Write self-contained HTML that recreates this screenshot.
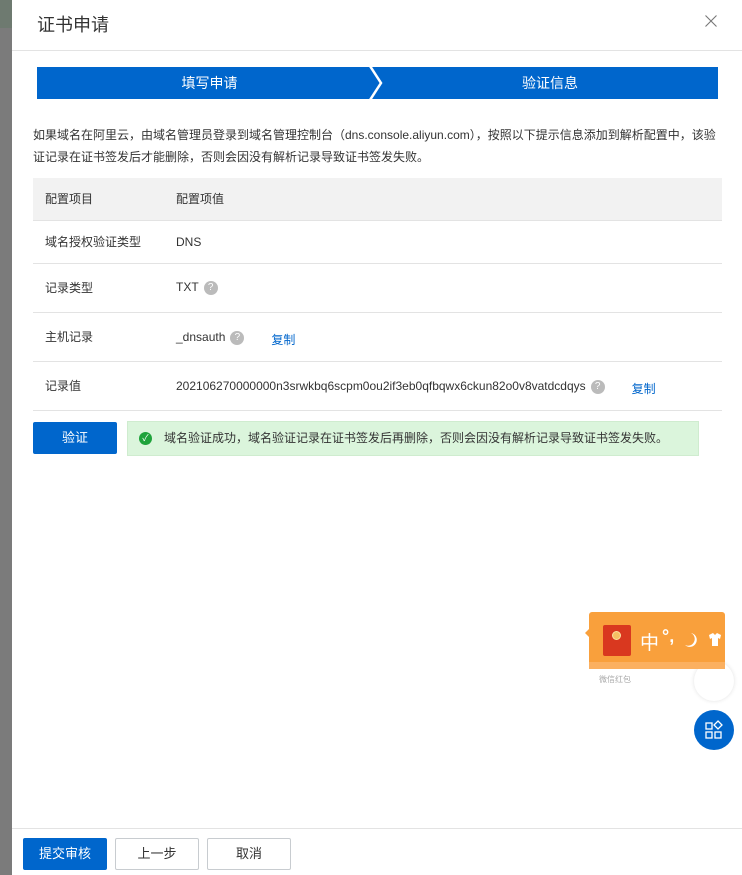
<!DOCTYPE html>
<html><head><meta charset="utf-8"><style>
*{box-sizing:border-box;margin:0;padding:0}
body{width:742px;height:875px;overflow:hidden;position:relative;background:#fff;font-family:"Liberation Sans","Noto Sans CJK SC",sans-serif;color:#333;font-size:12px}
.side{position:absolute;left:0;top:0;width:12px;height:875px;background:#7b7b7b}
.side .t{position:absolute;left:0;top:0;width:12px;height:28px;background:#6e7a70}
.modal{position:absolute;left:12px;top:0;width:730px;height:875px;background:#fff}
.title{position:absolute;left:25px;top:11px;font-size:18px;color:#333}
.hr{position:absolute;left:0;right:0;height:1px;background:#e3e3e3}
.steps{position:absolute;left:25px;top:67px;width:681px;height:32px}
.step{position:absolute;top:0;height:32px;background:#0066cc;color:#fff;font-size:14px;line-height:32px;text-align:center}
.desc{position:absolute;left:21px;top:124px;width:690px;font-size:12px;line-height:22px;color:#333}
table{position:absolute;left:21px;top:178px;width:689px;border-collapse:collapse}
td{border-bottom:1px solid #e3e3e3;padding-left:12px;font-size:12px;color:#333}
tr.h td{background:#f2f2f2;height:42px;border-bottom:1px solid #e3e3e3}
.q{display:inline-block;width:14px;height:14px;border-radius:50%;background:#bbb;color:#fff;font-size:10px;line-height:14px;text-align:center;vertical-align:middle;margin-left:5px}
.lk{color:#0066cc}
.btn{position:absolute;height:32px;line-height:30px;text-align:center;font-size:13px;border:1px solid #c8ccd0;background:#fff;color:#333;border-radius:2px}
.btn.p{background:#0066cc;border-color:#0066cc;color:#fff}
.msg{position:absolute;left:115px;top:421px;width:572px;height:35px;background:#dbf5dc;border:1px solid #cfeccf;line-height:33px;padding-left:36px;font-size:12px;color:#333}
.ok{position:absolute;left:11px;top:10px;width:13px;height:13px;border-radius:50%;background:#1fa33b;color:#fff;font-size:9px;line-height:13px;text-align:center}
</style></head><body>
<div class="side"><div class="t"></div></div>
<div class="modal">
<div class="title">证书申请</div>
<svg style="position:absolute;left:693px;top:15px" width="12" height="12"><path d="M0.5 0.5 L11.5 11.5 M11.5 0.5 L0.5 11.5" stroke="#777" stroke-width="1.1"/></svg>
<div class="hr" style="top:50px"></div>
<div class="steps">
<div class="step" style="left:0;width:345px">填写申请</div>
<div class="step" style="left:345px;width:336px">验证信息</div>
<svg style="position:absolute;left:332px;top:0" width="26" height="32"><path d="M0 0 L12 0 L22 16 L12 32 L0 32 L10 16Z" fill="#0066cc"/><path d="M1 -1 L12 16 L1 33" stroke="#fff" stroke-width="2.5" fill="none"/></svg>
</div>
<div class="desc">如果域名在阿里云，由域名管理员登录到域名管理控制台（dns.console.aliyun.com），按照以下提示信息添加到解析配置中，该验证记录在证书签发后才能删除，否则会因没有解析记录导致证书签发失败。</div>
<table>
<tr class="h"><td style="width:131px">配置项目</td><td>配置项值</td></tr>
<tr style="height:43px"><td>域名授权验证类型</td><td>DNS</td></tr>
<tr style="height:49px"><td>记录类型</td><td>TXT<span class="q">?</span></td></tr>
<tr style="height:49px"><td>主机记录</td><td>_dnsauth<span class="q">?</span><span class="lk" style="margin-left:27px;position:relative;top:3px">复制</span></td></tr>
<tr style="height:49px"><td>记录值</td><td>202106270000000n3srwkbq6scpm0ou2if3eb0qfbqwx6ckun82o0v8vatdcdqys<span class="q">?</span><span class="lk" style="margin-left:27px;position:relative;top:3px">复制</span></td></tr>
</table>
<div class="btn p" style="left:21px;top:422px;width:84px;height:32px">验证</div>
<div class="msg"><span class="ok">✓</span>域名验证成功，域名验证记录在证书签发后再删除，否则会因没有解析记录导致证书签发失败。</div>
<div class="hr" style="top:828px"></div>
<div class="btn p" style="left:11px;top:838px;width:84px">提交审核</div>
<div class="btn" style="left:103px;top:838px;width:84px">上一步</div>
<div class="btn" style="left:195px;top:838px;width:84px">取消</div>
</div>
<div style="position:absolute;left:694px;top:661px;width:40px;height:40px;border-radius:50%;background:#fff;box-shadow:0 0 4px rgba(0,0,0,.12)"></div>
<div style="position:absolute;left:589px;top:612px;width:136px;height:57px;background:#f9a03c;border-radius:3px"></div>
<div style="position:absolute;left:589px;top:662px;width:136px;height:7px;background:#fbb060"></div>
<div style="position:absolute;left:585px;top:628px;width:0;height:0;border:5px solid transparent;border-right-color:#f9a03c;border-left:0"></div>
<div style="position:absolute;left:603px;top:625px;width:28px;height:31px;background:#d9381f;border-radius:2px"></div>
<div style="position:absolute;left:612px;top:631px;width:9px;height:9px;border-radius:50%;background:#f5c063;border:1px solid #fbe0a0"></div>
<div style="position:absolute;left:640px;top:628px;color:#fff;font-size:19px">中</div>
<div style="position:absolute;left:662px;top:626px;color:#fff;font-size:18px;font-weight:bold">°,</div>
<svg style="position:absolute;left:685px;top:632px" width="40" height="16"><path d="M6 1 A7 7 0 1 1 0 13 A6 6 0 0 0 6 1Z" fill="#fff"/><path d="M24 3 L28 1 L30 3 L32 1 L36 3 L35 7 L33 6 L33 14 L27 14 L27 6 L25 7Z" fill="#fff"/></svg>
<div style="position:absolute;left:599px;top:674px;color:#aaa;font-size:8px">微信红包</div>
<div style="position:absolute;left:694px;top:710px;width:40px;height:40px;border-radius:50%;background:#0066cc">
<svg width="40" height="40" fill="none" stroke="#fff" stroke-width="1.3"><rect x="12" y="13" width="6" height="6"/><rect x="12" y="22" width="6" height="6"/><rect x="21" y="22" width="6" height="6"/><path d="M24 11 L28 15 L24 19 L20 15Z"/></svg>
</div>
</body></html>
